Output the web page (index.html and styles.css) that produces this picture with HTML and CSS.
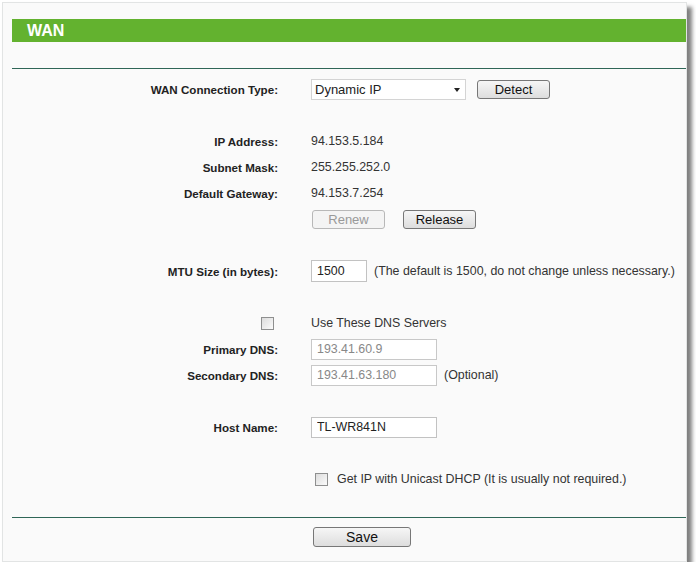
FILE: index.html
```html
<!DOCTYPE html>
<html lang="en">
<head>
  <meta charset="UTF-8">
  <title>WAN</title>
  <link rel="stylesheet" href="styles.css">
</head>
<body>
  <div class="panel">
    <div class="title">WAN</div>
    <div class="rule"></div>

    <div class="form">
      <div class="label">WAN Connection Type:</div>
      <div class="value">
        <div class="select">Dynamic IP<span class="arrow"></span></div>
        <button class="btn detect">Detect</button>
      </div>

      <div class="blank"></div>

      <div class="label">IP Address:</div>
      <div class="value">94.153.5.184</div>
      <div class="label">Subnet Mask:</div>
      <div class="value">255.255.252.0</div>
      <div class="label">Default Gateway:</div>
      <div class="value">94.153.7.254</div>
      <div class="label"></div>
      <div class="value">
        <button class="btn renew" disabled>Renew</button>
        <button class="btn release">Release</button>
      </div>

      <div class="blank"></div>

      <div class="label">MTU Size (in bytes):</div>
      <div class="value">
        <input class="field mtu" type="text" value="1500">
        <span class="note">(The default is 1500, do not change unless necessary.)</span>
      </div>

      <div class="blank"></div>

      <div class="label"><span class="check"></span></div>
      <div class="value">Use These DNS Servers</div>
      <div class="label">Primary DNS:</div>
      <div class="value"><input class="field" type="text" value="193.41.60.9" disabled></div>
      <div class="label">Secondary DNS:</div>
      <div class="value">
        <input class="field" type="text" value="193.41.63.180" disabled>
        <span class="note">(Optional)</span>
      </div>

      <div class="blank"></div>

      <div class="label">Host Name:</div>
      <div class="value"><input class="field" type="text" value="TL-WR841N"></div>

      <div class="blank"></div>

      <div class="label"></div>
      <div class="value unicast"><span class="check"></span>Get IP with Unicast DHCP (It is usually not required.)</div>
    </div>

    <div class="rule bottom"></div>
    <div class="actions">
      <button class="btn save">Save</button>
    </div>
  </div>
</body>
</html>
```

FILE: styles.css
```css
body {
  margin: 0;
  background: #fff;
  font-family: "Liberation Sans", Arial, sans-serif;
  font-size: 12px;
  color: #222;
}
.panel {
  box-sizing: border-box;
  margin: 2px 0 0 2px;
  width: 685px;
  height: 560px;
  padding: 16px 0 0 9px;
  border: 1px solid #e2e4e4;
  background: #fafafa;
  box-shadow: 5px 5px 4px rgba(0, 0, 0, 0.5);
}
.title {
  height: 23px;
  line-height: 23px;
  padding-left: 15px;
  background: #63b22f;
  color: #fff;
  font-size: 16px;
  font-weight: bold;
}
.rule {
  margin-top: 26px;
  height: 1px;
  background: #2f6657;
}
.rule.bottom {
  margin-top: 25px;
}
.form {
  display: grid;
  grid-template-columns: 266px 1fr;
  grid-auto-rows: 26px;
  column-gap: 33px;
  margin-top: 7px;
}
.label {
  display: flex;
  align-items: center;
  justify-content: flex-end;
  font-size: 11.6px;
  font-weight: bold;
  color: #222;
}
.value {
  display: flex;
  align-items: center;
  font-size: 12.4px;
  color: #333;
}
.blank {
  grid-column: 1 / 3;
}
.select {
  position: relative;
  box-sizing: border-box;
  width: 155px;
  height: 21px;
  line-height: 19px;
  padding-left: 3px;
  border: 1px solid #d4d4d4;
  background: #fff;
  font-size: 13px;
  color: #222;
}
.arrow {
  position: absolute;
  right: 5px;
  top: 8px;
  border-left: 3px solid transparent;
  border-right: 3px solid transparent;
  border-top: 4px solid #222;
}
.btn {
  box-sizing: border-box;
  height: 19px;
  padding: 0;
  border: 1px solid #777;
  border-radius: 3px;
  background: linear-gradient(#f6f6f6, #dddddd);
  font-family: "Liberation Sans", Arial, sans-serif;
  font-size: 13px;
  color: #111;
}
.detect {
  width: 73px;
  margin-left: 11px;
}
.renew {
  width: 73px;
  margin-left: 1px;
  border-color: #b8b8b8;
  background: #f4f4f4;
  color: #999;
}
.release {
  width: 73px;
  margin-left: 18px;
}
.field {
  box-sizing: border-box;
  width: 126px;
  height: 21px;
  margin: 0;
  padding: 0 0 0 5px;
  border: 1px solid #c2c2c2;
  background: #fff;
  font-family: "Liberation Sans", Arial, sans-serif;
  font-size: 12.4px;
  color: #222;
}
.field:disabled {
  color: #888;
  border-color: #c8c8c8;
}
.mtu {
  width: 56px;
  height: 22px;
}
.note {
  margin-left: 7px;
}
.check {
  box-sizing: border-box;
  display: inline-block;
  width: 13px;
  height: 13px;
  margin-right: 4px;
  border: 1px solid #8e8f8f;
  background: linear-gradient(135deg, #dcdcdc, #fbfbfb);
}
.unicast .check {
  margin: 0 9px 0 4px;
}
.actions {
  padding: 9px 0 0 301px;
}
.save {
  width: 98px;
  height: 20px;
  font-size: 14px;
}
```
